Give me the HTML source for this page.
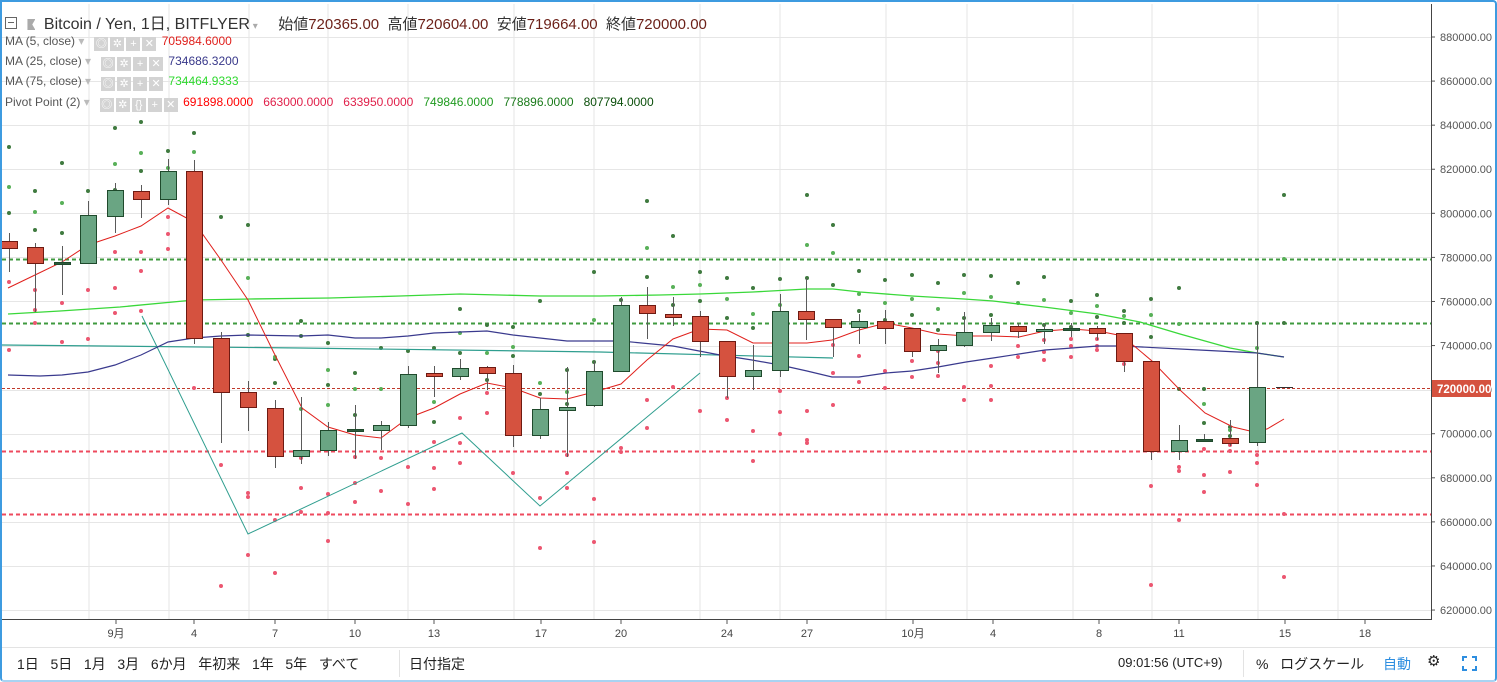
<!DOCTYPE html>
<html><head><meta charset="utf-8">
<style>
html,body{margin:0;padding:0;background:#fff;}
#wrap{position:relative;width:1497px;height:682px;overflow:hidden;font-family:"Liberation Sans","Noto Sans CJK JP",sans-serif;}
#frame{position:absolute;left:0;top:0;width:1493px;height:678px;border:2px solid #3e9be0;border-radius:0 4px 4px 4px;border-bottom-color:#a9d3f2;}
svg{position:absolute;left:0;top:0;}
.t{position:absolute;white-space:nowrap;}
.ind{position:absolute;left:5px;font-size:12px;color:#555;white-space:nowrap;}
.box{display:inline-block;width:14px;height:14px;background:#d3d3d3;margin-right:2px;vertical-align:-2px;color:#fff;font-size:11px;line-height:14px;text-align:center;}
.tb{position:absolute;top:654px;font-size:14px;color:#222;white-space:nowrap;}
</style></head><body>
<div id="wrap">
<svg id="s" width="1497" height="682"></svg>
<div id="frame"></div>
<div class="t" style="left:5px;top:10px;font-size:16px;color:#333;">
<span style="display:inline-block;width:10px;height:10px;border:1px solid #666;vertical-align:0px;position:relative;"><span style="position:absolute;left:2px;top:4px;width:6px;height:1px;background:#666"></span></span>
<span style="display:inline-block;width:8px;height:11px;background:#aaa;margin-left:6px;vertical-align:-1px;clip-path:polygon(0 0,100% 0,60% 50%,100% 100%,0 100%)"></span>
<span style="margin-left:4px;">Bitcoin / Yen, 1日, BITFLYER</span><span style="color:#aaa;font-size:10px;"> ▾</span>
<span style="margin-left:16px;font-size:15px;">始値<span style="color:#6b1f17">720365.00</span>&nbsp; 高値<span style="color:#6b1f17">720604.00</span>&nbsp; 安値<span style="color:#6b1f17">719664.00</span>&nbsp; 終値<span style="color:#6b1f17">720000.00</span></span>
</div>
<div class="ind" style="top:34px;">MA (5, close) <span style="color:#bbb">▾</span>&nbsp;&nbsp; <span class="box">◎</span><span class="box">✲</span><span class="box">+</span><span class="box">✕</span>&nbsp;<span style="color:#e0201c">705984.6000</span></div>
<div class="ind" style="top:54px;">MA (25, close) <span style="color:#bbb">▾</span>&nbsp;&nbsp; <span class="box">◎</span><span class="box">✲</span><span class="box">+</span><span class="box">✕</span>&nbsp;<span style="color:#38388a">734686.3200</span></div>
<div class="ind" style="top:74px;">MA (75, close) <span style="color:#bbb">▾</span>&nbsp;&nbsp; <span class="box">◎</span><span class="box">✲</span><span class="box">+</span><span class="box">✕</span>&nbsp;<span style="color:#2ed82e">734464.9333</span></div>
<div class="ind" style="top:95px;">Pivot Point (2) <span style="color:#bbb">▾</span>&nbsp;&nbsp; <span class="box">◎</span><span class="box">✲</span><span class="box">{}</span><span class="box">+</span><span class="box">✕</span>&nbsp;<span style="color:#f00">691898.0000</span>&nbsp;&nbsp; <span style="color:#e0204a">663000.0000</span>&nbsp;&nbsp; <span style="color:#e0204a">633950.0000</span>&nbsp;&nbsp; <span style="color:#1f9a1f">749846.0000</span>&nbsp;&nbsp; <span style="color:#1a7a1a">778896.0000</span>&nbsp;&nbsp; <span style="color:#0b4f0b">807794.0000</span></div>

<div class="tb" style="left:17px;">1日&nbsp;&nbsp; 5日&nbsp;&nbsp; 1月&nbsp;&nbsp; 3月&nbsp;&nbsp; 6か月&nbsp;&nbsp; 年初来&nbsp;&nbsp; 1年&nbsp;&nbsp; 5年&nbsp;&nbsp; すべて</div>
<div class="tb" style="left:409px;">日付指定</div>
<div class="tb" style="left:1118px;font-size:13px;top:655px;">09:01:56 (UTC+9)</div>
<div class="tb" style="left:1256px;">%&nbsp;&nbsp; ログスケール</div>
<div class="tb" style="left:1383px;color:#2d8ee0;">自動</div>
<div class="tb" style="left:1427px;font-size:15px;top:652px;">⚙</div>
</div>
<script>
var s=[],S=function(x){s.push(x)};
[89,169,249,328,408,514,594,700,780,886,967,1073,1152,1258,1338].forEach(function(x){S('<line x1="'+x+'" y1="4" x2="'+x+'" y2="619" stroke="#e6e6e6"/>')});
for(var k=0;k<14;k++){var y=Math.round(37+k*44.08)+.5;S('<line x1="2" y1="'+y+'" x2="1431" y2="'+y+'" stroke="#e6e6e6"/>');}
for(var k=0;k<14;k++){var p=880000-k*20000,y=37+k*44.08;S('<line x1="1431" y1="'+y+'" x2="1435" y2="'+y+'" stroke="#555"/><text x="1440" y="'+(y+4)+'" font-size="11" fill="#555" font-family="Liberation Sans">'+p+'.00</text>');}
S('<line x1="1431.5" y1="4" x2="1431.5" y2="620" stroke="#444"/>');
S('<line x1="2" y1="619.5" x2="1432" y2="619.5" stroke="#444"/>');
S('<line x1="2" y1="647.5" x2="1495" y2="647.5" stroke="#e3e3e3"/>');
S('<line x1="399.5" y1="650" x2="399.5" y2="677" stroke="#e3e3e3"/><line x1="1243.5" y1="650" x2="1243.5" y2="677" stroke="#e3e3e3"/>');
[[116,"9月"],[194,"4"],[275,"7"],[355,"10"],[434,"13"],[541,"17"],[621,"20"],[727,"24"],[807,"27"],[913,"10月"],[993,"4"],[1099,"8"],[1179,"11"],[1285,"15"],[1365,"18"]].forEach(function(a){S('<line x1="'+a[0]+'" y1="620" x2="'+a[0]+'" y2="624" stroke="#555"/><text x="'+a[0]+'" y="637" font-size="11" fill="#444" text-anchor="middle" font-family="Liberation Sans, Noto Sans CJK JP, sans-serif">'+a[1]+'</text>')});
function hl(y,c,d,w){S('<line x1="2" y1="'+y+'" x2="1431" y2="'+y+'" stroke="'+c+'" stroke-width="'+w+'" stroke-dasharray="'+d+'"/>');}
hl(259.5,"#3f9a3f","4 3",2);hl(323.5,"#3f9a3f","4 3",2);hl(451.5,"#ee4a5e","4 3",2);hl(514.5,"#ee4a5e","4 3",2);hl(388.5,"#c0392b","3 2",1);
var G={9:[147,187,213],35:[191,212,230],62:[163,203,233],88:[191],115:[128,164,190],141:[122,153,171],168:[151,168],194:[133,152],221:[217],248:[225,278,335],275:[359,357,383],301:[321,409,336],328:[343,370,385,405],355:[373,389,415],381:[348,389],408:[351,384,392],434:[348,402,422],460:[309,333,353],487:[325,353,380],513:[327,347,356],540:[301,383,394],567:[370,392,404],594:[272,320,362],621:[300],647:[201,248,277],673:[236,287,305],700:[272,285,301],727:[278,299,318],753:[288,314,328],780:[279,305,318],807:[195,245,278],833:[225,253,285],859:[271,294,311],885:[280,303,320],912:[275,299,315],938:[283,309,330],964:[275,293,318],991:[276,297,315],1018:[283,303,330],1044:[277,300,325],1071:[301,313,327],1097:[295,306,317],1124:[311,316,323],1151:[299,315,337],1179:[288,324,389],1204:[389,404,423],1230:[427,430,436],1257:[323,348],1284:[195,259,323]};
var R={9:[282,350],35:[290,310,323],62:[303,342],88:[290,339],115:[252,288,313],141:[252,271,311],168:[217,234,249],194:[388],221:[465,586],248:[493,497,555],275:[520,573],301:[488,458,512],328:[494,513,541],355:[457,483,502],381:[458,491],408:[467,504],434:[442,468,489],460:[418,443,463],487:[393,413],513:[420,473],540:[498,548],567:[455,473,488],594:[499,542],621:[448,452],647:[400,428],673:[387],700:[411],727:[398,420],753:[431,461],780:[391,412,434],807:[411,440,443],833:[345,373,405],859:[356,382],885:[371,388],912:[361,377],938:[351,363,376],964:[387,400],991:[366,386,400],1018:[346,357],1044:[340,352,360],1071:[339,346,357],1097:[339,346,350],1124:[364],1151:[486,585],1179:[443,467,471,520],1204:[449,475,492],1230:[445,451,472],1257:[455,463,485],1284:[514,577]};
for(var x in G)G[x].forEach(function(y,i){S('<circle cx="'+x+'" cy="'+y+'" r="2" fill="'+(i%2?"#58b058":"#3f7a3f")+'"/>')});
for(var x in R)R[x].forEach(function(y){S('<circle cx="'+x+'" cy="'+y+'" r="2" fill="#ec5670"/>')});
function pl(pts,c,w){S('<polyline fill="none" stroke="'+c+'" stroke-width="'+(w||1)+'" points="'+pts+'"/>');}
pl("2,345 300,348 600,352 833,358","#2f9e8f",1.2);
pl("142,316 248,534 462,433 540,506 700,373","#2f9e8f",1);
pl("8,314 60,311 120,307 194,300 250,299 330,298 400,296 460,294 540,296 600,296 660,295 700,294 753,292 807,289 833,289 860,292 912,296 964,299 993,301 1044,307 1098,314 1140,322 1180,334 1230,348 1257,353 1284,357","#3ad83a",1.3);
pl("8,375 40,376 62,375 88,372 115,365 141,355 168,342 194,338 221,336 248,335 301,336 328,335 355,338 381,338 408,336 434,333 460,332 487,331 513,335 540,338 567,341 621,341 673,346 720,355 752,360 780,365 807,371 832,377 859,377 886,373 912,371 938,367 966,362 993,358 1019,354 1045,350 1072,348 1098,346 1123,346 1180,349 1257,353 1284,357","#3a3a8e",1.2);
pl("8,288 35,275 62,262 88,245 115,236 141,226 168,208 194,222 221,260 248,300 274,353 302,408 328,427 355,435 381,438 408,418 434,408 460,394 487,383 513,388 540,398 567,399 594,392 621,384 647,360 673,339 700,329 727,330 753,343 780,343 807,343 832,340 859,330 886,323 912,328 938,334 966,336 993,336 1019,337 1045,331 1072,329 1098,331 1118,335 1133,345 1152,361 1180,390 1205,413 1233,427 1250,431 1267,429 1284,419","#e0201c",1);
var C=[[9,241,248,233,272,0],[35,247,263,243,312,0],[62,262,263,246,295,2],[88,215,263,201,263,1],[115,190,216,183,233,1],[141,191,199,185,218,0],[168,171,199,159,205,1],[194,171,338,160,344,0],[221,338,392,332,443,0],[248,392,407,381,431,0],[275,408,456,400,468,0],[301,450,456,397,464,1],[328,430,450,422,456,1],[355,429,431,405,459,3],[381,425,430,421,450,1],[408,374,425,366,428,1],[434,373,376,366,397,0],[460,368,376,359,380,1],[487,367,373,366,390,0],[513,373,435,365,447,0],[540,409,435,398,439,1],[567,407,410,367,457,1],[594,371,405,361,407,1],[621,305,371,297,371,1],[647,305,313,287,339,0],[673,314,317,297,326,0],[700,316,341,311,357,0],[727,341,376,341,398,0],[753,370,376,345,390,1],[780,311,370,294,377,1],[806,311,319,278,340,0],[833,319,327,319,357,0],[859,321,327,314,344,1],[885,321,328,310,344,0],[912,328,351,328,357,0],[938,345,350,339,373,1],[964,332,345,312,347,1],[991,325,332,318,341,1],[1018,326,331,323,338,0],[1044,329,331,324,344,1],[1071,328,330,323,337,3],[1097,328,333,326,340,0],[1124,333,361,333,372,0],[1151,361,451,361,460,0],[1179,440,451,425,460,1],[1204,439,441,434,442,3],[1230,438,443,420,446,0],[1257,387,442,323,446,1]];
C.forEach(function(c){var x=c[0];S('<line x1="'+(x+.5)+'" y1="'+c[3]+'" x2="'+(x+.5)+'" y2="'+c[4]+'" stroke="#5a5a5a"/>');
var f=c[5]==0?"#d5523f":c[5]==1?"#6aa583":"#2d5a3d",st=c[5]==0?"#6e1a12":"#1f4a2c";var h=Math.max(c[2]-c[1],2);
S('<rect x="'+(x-7.5)+'" y="'+(c[1]+.5)+'" width="16" height="'+h+'" fill="'+f+'" stroke="'+st+'"/>');});
S('<line x1="1276" y1="387.5" x2="1293" y2="387.5" stroke="#333"/>');
S('<rect x="1432" y="380" width="59" height="17" fill="#d5523f"/><text x="1437" y="393" font-size="11.5" font-weight="bold" fill="#fff" font-family="Liberation Sans">720000.00</text>');
S('<path d="M1463 661v-4h4M1472 657h4v4M1476 666v4h-4M1467 670h-4v-4" fill="none" stroke="#2d8ee0" stroke-width="2"/>');
document.getElementById("s").innerHTML=s.join("");
</script>
</body></html>
